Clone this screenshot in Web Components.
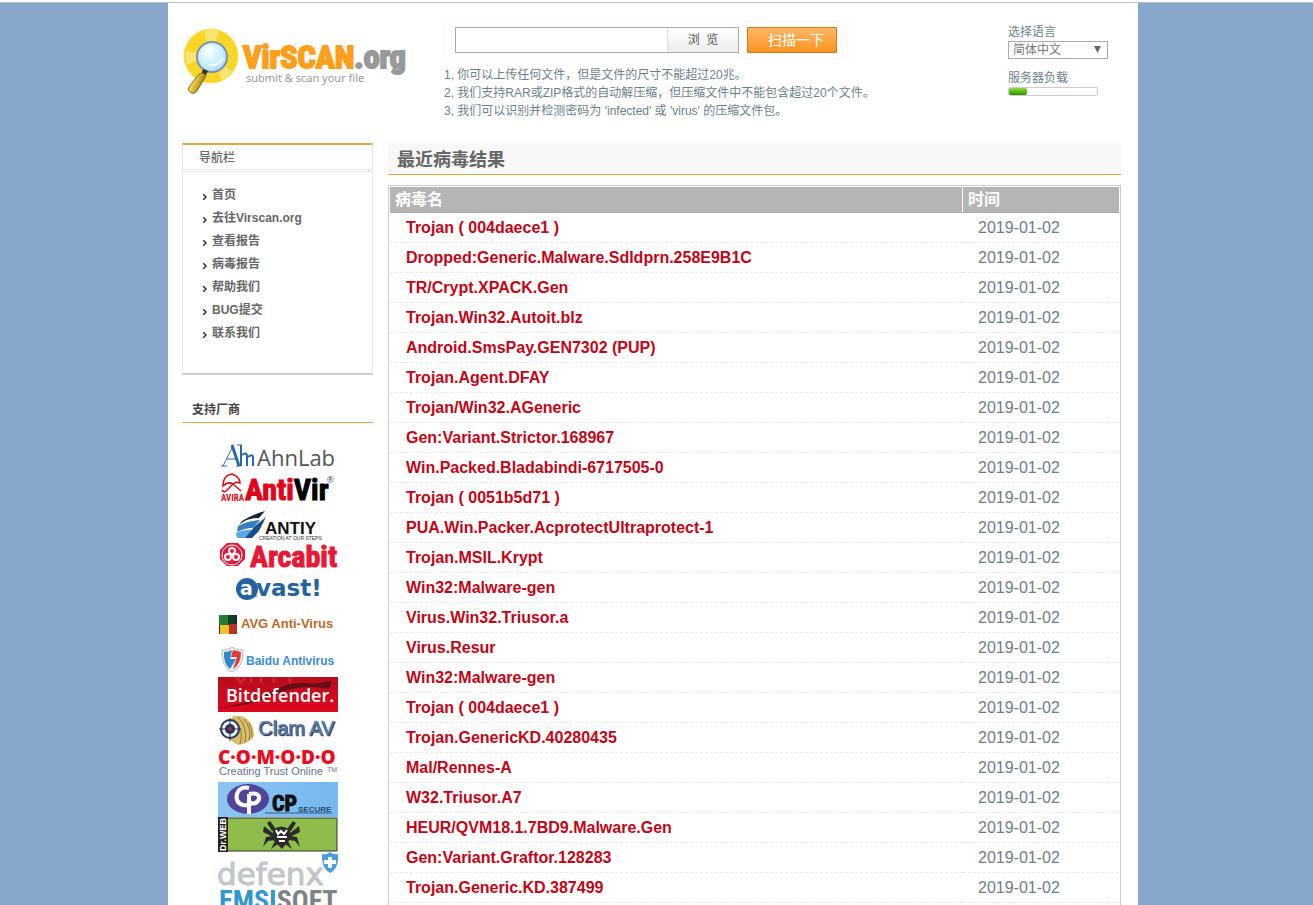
<!DOCTYPE html>
<html lang="zh-CN">
<head>
<meta charset="utf-8">
<title>VirSCAN.org</title>
<style>
  body { margin: 0; background: #87a7cb; font: 12px/18px "Liberation Sans", "Noto Sans CJK SC", sans-serif; color: #6b7f8d; }
</style>
</head>
<body>
<site-page>
  <site-header slot="header"></site-header>
  <nav-panel slot="side" heading="导航栏">
    <a href="#home">首页</a>
    <a href="#virscan">去往Virscan.org</a>
    <a href="#report">查看报告</a>
    <a href="#virus">病毒报告</a>
    <a href="#help">帮助我们</a>
    <a href="#bug">BUG提交</a>
    <a href="#contact">联系我们</a>
  </nav-panel>
  <vendor-list slot="side"></vendor-list>
  <section-title>最近病毒结果</section-title>
  <virus-results></virus-results>
</site-page>

<template id="t-page">
  <style>
    :host { display: block; height: 100vh; overflow: hidden; box-sizing: border-box; border-top: 2px solid #fff; padding-right: 7px; }
    .rule { height: 1px; background: #b9bec4; margin-right: -7px; }
    .sheet { box-sizing: border-box; max-width: 970px; min-height: 100%; margin: 0 auto; padding: 0 17px 0 14px; background: #fff; }
    .cols { display: grid; grid-template-columns: 191px minmax(0, 1fr); gap: 15px; }
  </style>
  <div class="rule"></div>
  <div class="sheet">
    <slot name="header"></slot>
    <div class="cols"><aside><slot name="side"></slot></aside><main><slot></slot></main></div>
  </div>
</template>

<template id="t-header">
  <style>
    :host { display: grid; grid-template-columns: 262px minmax(0, 1fr) 113px; height: 140px; }
    site-logo { padding-top: 22px; }
    upload-form { padding-top: 18px; }
    server-status { padding-top: 20px; }
  </style>
  <site-logo></site-logo><upload-form></upload-form><server-status></server-status>
</template>

<template id="t-logo">
  <style>
    :host { display: block; }
    svg { display: block; overflow: visible; }
    .name { font: bold 32px "Liberation Sans Narrow", "Roboto Condensed", "Liberation Sans", sans-serif; stroke-width: 2; }
    .tag { font: 11px "Noto Sans", sans-serif; fill: #999; }
  </style>
  <svg width="230" height="76" viewBox="0 0 230 76" role="img" aria-label="VirSCAN.org">
    <defs>
      <radialGradient id="lens" cx=".4" cy=".35" r=".7"><stop offset="0" stop-color="#f2ffff"/><stop offset=".6" stop-color="#c8eff9"/><stop offset="1" stop-color="#a5dbee"/></radialGradient>
      <linearGradient id="grip" x1="0" x2="1" y1="0" y2=".5"><stop offset="0" stop-color="#9c7a14"/><stop offset=".4" stop-color="#f5d648"/><stop offset="1" stop-color="#8a6410"/></linearGradient>
    </defs>
    <circle cx="29" cy="31" r="27" fill="#f8d626" stroke="#f9e25f"/>
    <path d="M29 31 22 6A26 26 0 0 1 37 6ZM29 31 4 26A26 26 0 0 0 5 39ZM29 31 50 46A26 26 0 0 1 40 55Z" fill="#fff" opacity=".35"/>
    <circle cx="30" cy="32" r="15" fill="url(#lens)" stroke="#7d8fb4" stroke-width="2"/>
    <path d="M22 29q2-7 9-7-1 7-9 7M27 40q9 2 14-7" fill="none" stroke="#fff" stroke-width="2" opacity=".8"/>
    <path d="m21 44 5 2-3 6-4-2Z" fill="#333"/>
    <path d="M17 49q5-2 7 2L15 66q-3 4-7 1-3-2-1-5Z" fill="url(#grip)" stroke="#8b701f"/>
    <text class="name" x="61" y="43" fill="#ff9f1c" stroke="#ff9f1c">VirSCAN<tspan fill="#999" stroke="#999">.org</tspan></text>
    <text class="tag" x="64" y="57">submit &amp; scan your file</text>
  </svg>
</template>

<template id="t-upload">
  <style>
    :host { display: block; }
    form { display: flex; gap: 8px; width: 404px; height: 38px; box-sizing: border-box; padding: 5px 10px; border: 1px solid #fafafa; }
    .file { display: flex; width: 284px; height: 26px; box-sizing: border-box; border: 1px solid #aaa; }
    input { flex: 1; min-width: 0; border: 0; padding: 0 4px; background: #fff; outline: 0; }
    button { font: inherit; padding: 0; }
    .browse { width: 71px; border: 0; border-left: 1px solid #ddd; background: linear-gradient(#fff, #ececec); color: #555; white-space: pre; }
    .scan { width: 90px; height: 26px; border: 1px solid #cf7c24; background: linear-gradient(#ffb765, #fd9420); color: #fff; font-size: 14px; padding-left: 8px; }
    p { margin: 0; white-space: nowrap; }
    .tips { padding-top: 7px; }
  </style>
  <form>
    <div class="file"><input type="text" aria-label="文件"><button class="browse" type="button">浏  览</button></div>
    <button class="scan" type="button">扫描一下</button>
  </form>
  <div class="tips">
    <p>1, 你可以上传任何文件，但是文件的尺寸不能超过20兆。</p>
    <p>2, 我们支持RAR或ZIP格式的自动解压缩，但压缩文件中不能包含超过20个文件。</p>
    <p>3, 我们可以识别并检测密码为 'infected' 或 'virus' 的压缩文件包。</p>
  </div>
</template>

<template id="t-status">
  <style>
    :host { display: block; }
    label, .load { display: block; height: 18px; }
    select { appearance: none; display: block; width: 100px; height: 18px; margin: 0 0 10px; padding: 0 4px; border: 1px solid #aaa; border-radius: 0; color: #777; font: 12px/16px "Liberation Sans", "Noto Sans CJK SC", sans-serif;
      background: #fff url("data:image/svg+xml,%3Csvg xmlns='http://www.w3.org/2000/svg' width='8' height='7'%3E%3Cpath d='M0 0h7L3.500 7z' fill='%23666'/%3E%3C/svg%3E") no-repeat right 5px top 4px; }
    .bar { width: 90px; height: 9px; box-sizing: border-box; border: 1px solid #ccc; border-radius: 2px; }
    .bar i { display: block; width: 20%; height: 7px; border-radius: 2px; background: linear-gradient(#8ada45, #4fb60c 60%, #2f8a00); }
  </style>
  <label for="lang">选择语言</label>
  <select id="lang"><option>简体中文</option></select>
  <span class="load" id="load">服务器负载</span>
  <div class="bar" role="meter" aria-labelledby="load" aria-valuenow="20"><i></i></div>
</template>

<template id="t-nav">
  <style>
    :host { display: block; font-weight: bold; color: #666; }
    h2 { margin: 0 0 1px; padding: 4px 16px 2px; font-size: 12px; line-height: 18px; font-weight: 500; border: 1px solid #e4e4e4; border-top: 2px solid #e5a83c; }
    nav { display: flex; flex-direction: column; padding: 12px 20px 28px; border: 1px solid #e8e8e8; border-bottom: 2px solid #ccc; }
    ::slotted(a) { display: block; line-height: 23px; padding-left: 9px; color: #666; text-decoration: none;
      background: url("data:image/svg+xml,%3Csvg xmlns='http://www.w3.org/2000/svg' width='4' height='6'%3E%3Cpath d='M0 0 3 3 0 6' fill='none' stroke='%23333' stroke-width='1.5'/%3E%3C/svg%3E") no-repeat 0 10px; }
  </style>
  <h2></h2>
  <nav><slot></slot></nav>
</template>

<template id="t-title">
  <style>
    :host { display: block; margin-bottom: 10px; background: #f8f8f8; border-bottom: 1px solid #e5a83c; }
    h1 { margin: 0; padding: 5px 9px 2px; font-size: 18px; line-height: 24px; color: #666; }
  </style>
  <h1><slot></slot></h1>
</template>

<template id="t-results">
  <style>
    :host { display: block; border: 1px solid #ccc; padding: 1px 1px 30px; font-size: 16px; }
    table { width: 100%; table-layout: fixed; border-collapse: separate; border-spacing: 0; }
    th { height: 26px; box-sizing: border-box; padding: 0 5px; background: #b5b5b5; color: #fff; text-align: left; line-height: 24px; border-bottom: 1px solid #aaa; }
    th:first-child { border-right: 1px solid #fff; }
    th:last-child { width: 156px; }
    td { height: 30px; box-sizing: border-box; padding: 0 15px; line-height: 29px; border-bottom: 1px dashed #e6ecee; white-space: nowrap; color: #6f7d88; }
    td:first-child { padding-left: 16px; }
    a { color: #c00418; font-weight: bold; text-decoration: none; }
  </style>
  <table>
    <thead><tr><th scope="col">病毒名</th><th scope="col">时间</th></tr></thead>
    <tbody></tbody>
  </table>
</template>

<template id="t-vendors">
  <style>
    :host { display: block; margin-top: 26px; }
    h2 { margin: 0 0 9px; padding: 0 10px 3px; font-size: 12px; line-height: 18px; color: #444; border-bottom: 1px solid #e5a83c; }
    ul { list-style: none; margin: 0; padding: 0 0 0 36px; }
    li, svg { display: block; height: 35px; }
    svg { width: 120px; overflow: visible; }
    text { font-family: "Liberation Sans", sans-serif; }
    .b { font-weight: bold; }
    .narrow { font-family: "Liberation Sans Narrow", "Roboto Condensed", "Liberation Sans", sans-serif; font-weight: bold; }
    .open { font-family: "Open Sans", sans-serif; }
  </style>
  <h2>支持厂商</h2>
  <ul>
    <li><svg viewBox="0 -5 120 35">
      <g fill="none" stroke="#2d67a9"><path d="M5 29 15 9M3 29h6M9 22h9M19 8h5M18 29h5" stroke-width="1"/><path d="m14 8 7 21" stroke-width="3"/><path d="M23 8v21M29 18v11" stroke-width="2"/><path d="M24 18q5-4 5 2v9M30 20q5-4 5 1v8" stroke-width="2"/></g>
      <text class="open" x="39" y="29" font-size="22" font-weight="400" fill="#555">AhnLab</text></svg></li>
    <li><svg viewBox="0 -2 120 35">
      <path d="M5 17q0-11 9-12 8 3 8 9-4-2-7 1-5-3-10 2Zm10-2L8 22q-2 2-4-1M15 15l8 7" fill="none" stroke="#d8091b" stroke-width="1.500"/>
      <text class="narrow" x="3" y="32" font-size="9" fill="#d8091b">AVIRA</text>
      <text class="narrow" x="27" y="31" font-size="30" fill="#e2001a" stroke="#e2001a">Anti<tspan fill="#000" stroke="#000">Vir</tspan></text>
      <text x="109" y="14" font-size="9" fill="#333">®</text></svg></li>
    <li><svg viewBox="0 -4 120 35">
      <path d="M24 15q9-6 23-10l-6 7q-12 0-20 7Z" fill="#17253c"/><path d="M20 20q9-5 22-6l-7 8q-8 0-16 4Z" fill="#347ec1"/><path d="M18 27q8-4 16-3l-6 8H19Z" fill="#5ba8e0"/><path d="m37 20 11-9-7 14-7 7h-7Z" fill="#1a4e8e"/>
      <text class="b" x="47" y="28" font-size="17" fill="#111">ANTIY</text><text x="41" y="34" font-size="5" fill="#333">CREATION AT OUR STEPS</text></svg></li>
    <li><svg viewBox="0 3 120 35">
      <path d="M9 9h11l7 7v9l-7 7H9l-7-7v-9Z" fill="#e51937"/><circle cx="14" cy="21" r="10" fill="none" stroke="#fff"/>
      <g fill="none" stroke="#fff" stroke-width="2"><circle cx="14" cy="17" r="3"/><circle cx="10" cy="23" r="3"/><circle cx="18" cy="23" r="3"/></g>
      <text class="narrow" x="32" y="33" font-size="30" fill="#e51937" stroke="#e51937">Arcabit</text></svg></li>
    <li><svg viewBox="0 1 120 35">
      <circle cx="29" cy="18" r="11" fill="#24639f"/><path d="m31 28 9-3-7-2Z" fill="#24639f"/><text x="22" y="24" font-size="19" style="font-family:'DejaVu Sans',sans-serif" font-weight="bold" fill="#fff">a</text>
      <text x="38" y="25" font-size="23" font-weight="bold" style="font-family:'DejaVu Sans',sans-serif" fill="#24639f">vast!</text></svg></li>
    <li><svg viewBox="0 0 120 35">
      <path d="M1 8h18v19H1Z" fill="#222"/><path d="M1 8h9v10H1Z" fill="#287d31"/><path d="M10 8h8v9h-8Z" fill="#163c24"/><path d="M2 18h9v9H2Z" fill="#eec325"/><path d="M11 17h8v10h-8Z" fill="#b73126"/>
      <text class="b" x="23" y="21" font-size="13" fill="#bd682c">AVG Anti-Virus</text></svg></li>
    <li><svg viewBox="0 0 120 35">
      <path d="M4 8q6 1 10-3 5 4 11 3 1 17-11 22Q3 25 4 8Z" fill="#eee" stroke="#bbb"/><path d="M6 10q5 0 8-2l-2 9h6l-6 10Q5 21 6 10Z" fill="#2f88cd"/><path d="m15 8 8 2q0 12-8 17l4-12h-6Z" fill="#df3938"/>
      <text class="b" x="28" y="23" font-size="12" fill="#3b8ed6">Baidu Antivirus</text></svg></li>
    <li><svg viewBox="0 0 120 35">
      <defs><linearGradient id="bd" x2="0" y2="1"><stop stop-color="#b60e1c"/><stop offset="1" stop-color="#df0720"/></linearGradient></defs>
      <path d="M0 0h120v35H0Z" fill="url(#bd)"/><path d="M52 15Q74 3 94 7l20-3-3 8q-29-6-55 6Q30 30 0 31 32 27 52 15Z" fill="#4d101a" opacity=".8"/><path d="M18 0 23 6 27 0M33 6V0M43 0v6M56 0v6M72 0v6" stroke="#dc5055" opacity=".35" fill="none" stroke-width="3"/>
      <text class="open" x="8" y="25" font-size="18" font-weight="600" fill="#fff">Bitdefender.</text></svg></li>
    <li><svg viewBox="0 0 120 35">
      <path d="M15 4q15-2 20 12l1 8q-5 8-16 9-12-6-12-16Z" fill="#d8bd6b"/><path d="M20 5q10 10 7 26M26 7q8 10 5 21M15 7q12 9 7 25M31 11q4 7 3 15" fill="none" stroke="#967a36"/>
      <circle cx="12" cy="17" r="9" fill="#e9eef6" stroke="#253555" stroke-width="2"/><circle cx="12" cy="17" r="5" fill="#26365a"/><circle cx="12" cy="17" r="2" fill="#b4293e"/><path d="M1 17h8M15 17h8M12 6v8M12 20v9" stroke="#253555"/>
      <text x="40" y="23" font-size="20" fill="#6d91be" stroke="#6d91be" stroke-width=".5" style="text-shadow:1px 1px #24334d">Clam AV</text></svg></li>
    <li><svg viewBox="0 0 120 35">
      <text class="open" x="0" y="17" font-size="19" font-weight="800" fill="#e90c20">C·O·M·O·D·O</text>
      <text x="1" y="28" font-size="11" fill="#667393">Creating Trust Online</text><text x="109" y="25" font-size="7" fill="#667393">TM</text></svg></li>
    <li><svg viewBox="0 0 120 35">
      <defs><linearGradient id="cp"><stop stop-color="#8cc5ef"/><stop offset="1" stop-color="#76b7f0"/></linearGradient></defs>
      <path d="M0 0h120v35H0Z" fill="url(#cp)"/><ellipse cx="30" cy="17" rx="21" ry="15" fill="#51449b"/><path d="M31 6q-9-2-12 6-2 9 6 11 6 1 10-3M31 12v20M31 12q11-2 10 5-2 6-11 4" fill="none" stroke="#fff" stroke-width="4"/>
      <text class="narrow" x="54" y="29" font-size="22" fill="#111" stroke="#111">CP</text><text class="b" x="80" y="30" font-size="8" fill="#24506e">SECURE</text><path d="M47 31h67" stroke="#365f7d"/></svg></li>
    <li><svg viewBox="0 0 120 35">
      <path d="M1 1h118v33H1Z" fill="#8fbd4c" stroke="#333"/><path d="M0 0h10v35H0Z" fill="#222"/><text class="b" transform="translate(8 34) rotate(-90)" font-size="9" fill="#fff">Dr.WEB</text>
      <g fill="#2b2b2b"><path d="m58 12-6-8-3 2 5 8ZM69 12l6-8 3 2-5 8ZM56 17 46 9l-1 6 10 5ZM71 17l10-8 1 6-10 5ZM55 19l-7 1-3 10 5-6 6-1ZM72 19l7 1 3 10-5-6-6-1ZM57 24l-4 8 7-5ZM70 24l4 8-7-5Z"/></g>
      <path d="M55 13q8-7 17 0l1 8-9 11-9-9Z" fill="#2b2b2b"/><path d="m58 13 2 4 3-3 3 3 3-4M59 20h10M61 24h6" stroke="#fff" stroke-width="2" fill="none"/></svg></li>
    <li><svg viewBox="0 0 120 35">
      <text x="-1" y="33" font-size="31" style="font-family:'DejaVu Sans',sans-serif" fill="#c3c6c8" stroke="#c3c6c8">defenx</text>
      <path d="M104 2q5 1 8-2 3 3 8 2 1 15-8 19-9-5-8-19Z" fill="#4b9be2"/><path d="M112 5v11M106 10h12" stroke="#fff" stroke-width="4"/></svg></li>
    <li><svg viewBox="0 0 120 35">
      <text class="narrow" x="1" y="23" font-size="28" fill="#3297cc">EMSI<tspan fill="#7b8588">SOFT</tspan></text></svg></li>
  </ul>
</template>

<script>
  class TemplateElement extends HTMLElement {
    constructor() {
      super();
      this.attachShadow({ mode: "open" }).append(
        document.getElementById(this.constructor.template).content.cloneNode(true));
    }
  }
  const define = (name, template) =>
    customElements.define(name, class extends TemplateElement { static template = template; });

  define("site-logo", "t-logo");
  define("upload-form", "t-upload");
  define("server-status", "t-status");
  define("site-header", "t-header");
  define("section-title", "t-title");
  define("vendor-list", "t-vendors");
  define("site-page", "t-page");

  customElements.define("nav-panel", class extends TemplateElement {
    static template = "t-nav";
    connectedCallback() {
      this.shadowRoot.querySelector("h2").textContent = this.getAttribute("heading");
    }
  });

  const results = [
    "Trojan ( 004daece1 )", "Dropped:Generic.Malware.Sdldprn.258E9B1C", "TR/Crypt.XPACK.Gen",
    "Trojan.Win32.Autoit.blz", "Android.SmsPay.GEN7302 (PUP)", "Trojan.Agent.DFAY",
    "Trojan/Win32.AGeneric", "Gen:Variant.Strictor.168967", "Win.Packed.Bladabindi-6717505-0",
    "Trojan ( 0051b5d71 )", "PUA.Win.Packer.AcprotectUltraprotect-1", "Trojan.MSIL.Krypt",
    "Win32:Malware-gen", "Virus.Win32.Triusor.a", "Virus.Resur", "Win32:Malware-gen",
    "Trojan ( 004daece1 )", "Trojan.GenericKD.40280435", "Mal/Rennes-A", "W32.Triusor.A7",
    "HEUR/QVM18.1.7BD9.Malware.Gen", "Gen:Variant.Graftor.128283", "Trojan.Generic.KD.387499"
  ];
  customElements.define("virus-results", class extends TemplateElement {
    static template = "t-results";
    connectedCallback() {
      const body = this.shadowRoot.querySelector("tbody");
      for (const name of results) {
        const row = body.insertRow();
        const link = document.createElement("a");
        link.href = "#" + encodeURIComponent(name);
        link.textContent = name;
        row.insertCell().append(link);
        row.insertCell().textContent = "2019-01-02";
      }
    }
  });
</script>
</body>
</html>
